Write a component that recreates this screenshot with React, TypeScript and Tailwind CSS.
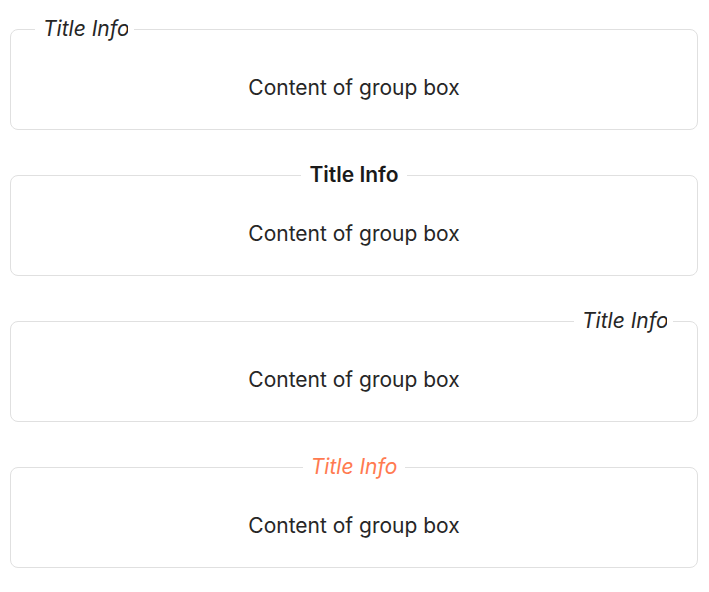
import React from 'react';

type Align = 'left' | 'center' | 'right';

interface GroupBoxProps {
    title: string;
    align: Align;
    titleClass: string;
    clip?: boolean;
}

const GroupBox: React.FC<GroupBoxProps> = ({ title, align, titleClass, clip }) => {
    const alignClass =
        align === 'left' ? 'ml-[24px]' : align === 'right' ? 'ml-auto mr-[24px]' : 'mx-auto';

    return (
        <fieldset className="border border-[#e0e0e0] rounded-lg p-0 m-0 min-w-0">
            <legend className={`${alignClass} pl-2 pr-[6px] text-[21px] leading-[28px] ${titleClass}`}>
                {clip ? (
                    <span className="inline-block w-[85px] overflow-hidden whitespace-nowrap align-top">{title}</span>
                ) : (
                    <span className="pr-[2px]">{title}</span>
                )}
            </legend>
            <div className="pt-[31px] pb-[27px] text-center text-[21px] leading-[28px] text-[#262626]">
                Content of group box
            </div>
        </fieldset>
    );
};

export default function App() {
    return (
        <div
            className="w-[709px] h-[592px] bg-white pl-[10px] pr-[11px] pt-[15px] flex flex-col gap-[31px]"
            style={{ fontFamily: 'Inter, "Noto Sans", sans-serif' }}
        >
            <GroupBox title="Title Info" align="left" titleClass="italic text-[#262626]" clip />
            <GroupBox title="Title Info" align="center" titleClass="font-semibold text-[#1a1a1a]" />
            <GroupBox title="Title Info" align="right" titleClass="italic text-[#262626]" clip />
            <GroupBox title="Title Info" align="center" titleClass="italic text-[#ff7a50]" />
        </div>
    );
}
